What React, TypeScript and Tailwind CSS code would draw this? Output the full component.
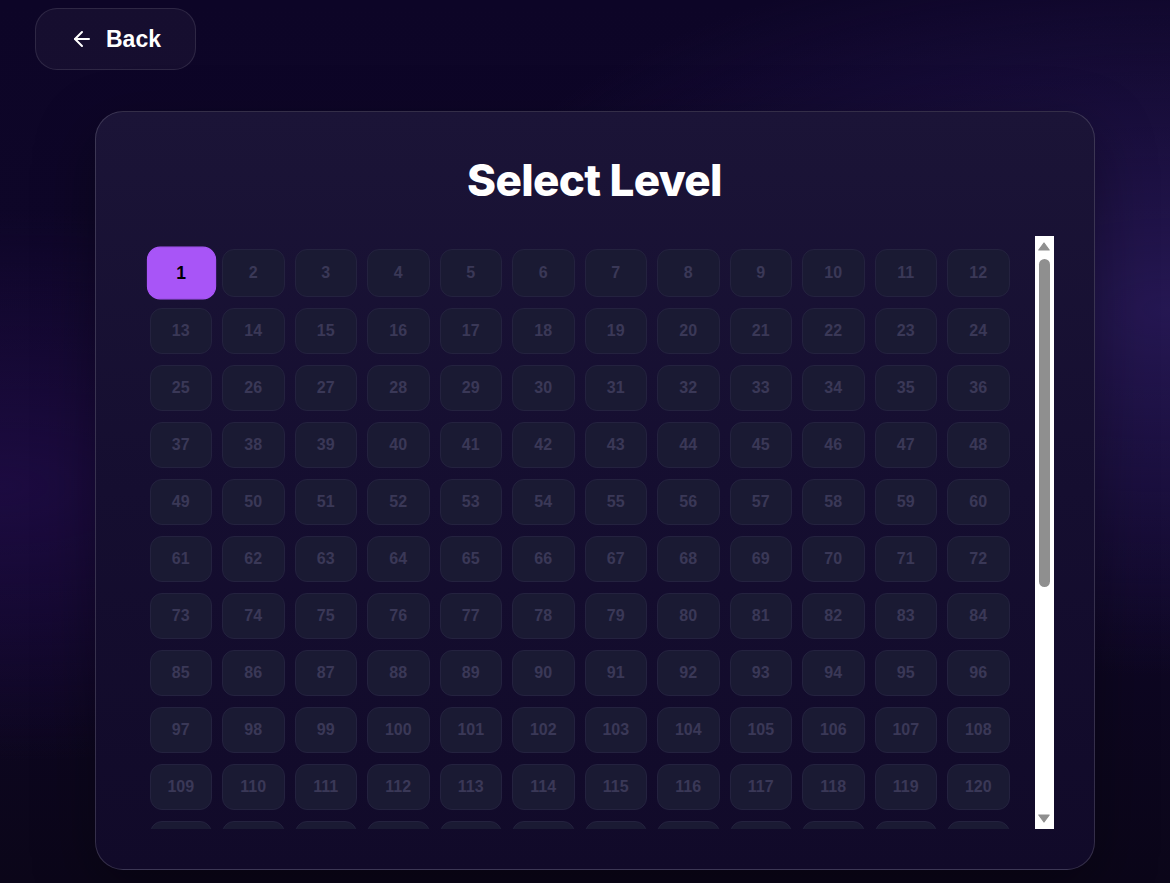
import { ArrowLeft } from "lucide-react";
import clsx from "clsx";

const LEVELS = Array.from({ length: 200 }, (_, i) => i + 1);
const CURRENT = 1;

function LevelButton({ level }: { level: number }) {
  const active = level === CURRENT;
  return (
    <button
      className={clsx(
        "flex h-full items-center justify-center rounded-xl border text-base font-bold font-['Liberation_Sans',Arial,sans-serif]",
        active
          ? "min-h-[48px] scale-110 border-[#a855f7] bg-[#a855f7] text-black"
          : "min-h-[46px] border-[#24223f] bg-[#1a1a33] text-[#3a3857]",
      )}
    >
      {level}
    </button>
  );
}

function Arrow({ down }: { down?: boolean }) {
  return (
    <svg width="12" height="9" viewBox="0 0 12 9" className={clsx(down && "rotate-180")}>
      <path d="M6 1 L11.2 8 L0.8 8 Z" fill="#8f8f8f" stroke="#8f8f8f" strokeWidth="1.2" strokeLinejoin="round" />
    </svg>
  );
}

// fake classic scrollbar, the page renders without native ones
function ScrollRail() {
  return (
    <div className="flex w-[19px] shrink-0 flex-col bg-white">
      <div className="flex h-[19px] items-start justify-center pt-[6px]">
        <Arrow />
      </div>
      <div className="flex-1 px-[4px] pt-[4px]">
        <div className="h-[328px] w-[11px] rounded-full bg-[#8f8f8f]" />
      </div>
      <div className="flex h-[19px] items-start justify-center pt-[4px]">
        <Arrow down />
      </div>
    </div>
  );
}

export default function App() {
  return (
    <div className="min-h-screen w-full bg-[radial-gradient(ellipse_at_100%_35%,#251752_0%,transparent_45%),radial-gradient(ellipse_at_0%_55%,#1c0b40_0%,transparent_40%),linear-gradient(180deg,#0d0527_0%,#0f0729_55%,#0b0619_100%)] pb-[14px]">
      <div className="px-[35px] pt-2">
        <button className="flex items-center gap-3 rounded-[22px] border border-white/10 bg-white/[0.04] px-[34px] py-[15px] text-[23px] font-bold leading-[30px] text-white font-['Liberation_Sans',Arial,sans-serif]">
          <ArrowLeft className="size-6" strokeWidth={2} />
          Back
        </button>
      </div>

      {/* level card */}
      <div className="mt-[41px] flex justify-center pl-[19px]">
        <div className="w-[1000px] rounded-[28px] border border-white/15 bg-[linear-gradient(180deg,#1b1437_0%,#150e30_50%,#110a29_100%)] px-10 pb-10 pt-[44px] shadow-[0_20px_60px_rgba(0,0,0,0.35)]">
          <h1 className="text-center font-['Inter',sans-serif] text-[44px] font-extrabold leading-[1.1] tracking-[-0.015em] text-white">
            Select Level
          </h1>

          <div className="mt-8 flex h-[593px]">
            <div className="min-w-0 flex-1 overflow-y-auto pb-[13px] pl-[14px] pr-[25px] pt-[13px] [scrollbar-width:none]">
              <div className="grid grid-cols-12 gap-x-[10px] gap-y-[11px]">
                {LEVELS.map((lvl) => (
                  <LevelButton key={lvl} level={lvl} />
                ))}
              </div>
            </div>
            <ScrollRail />
          </div>
        </div>
      </div>
    </div>
  );
}
